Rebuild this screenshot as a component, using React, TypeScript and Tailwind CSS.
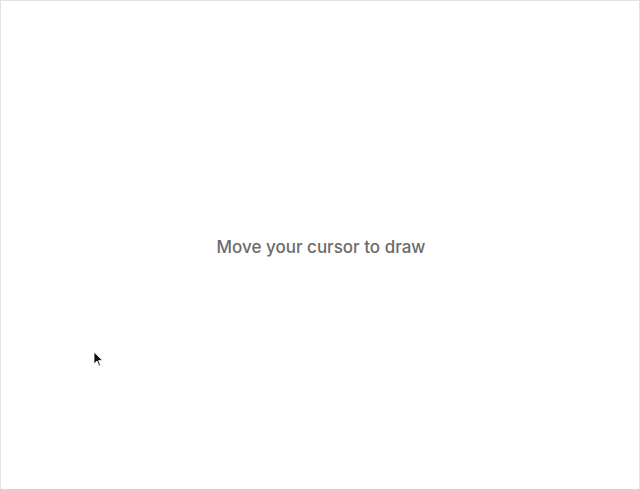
import React from "react";

export default function App() {
  return (
    <div className="relative w-[640px] h-[489px] bg-white border-t border-l border-r border-[#e2e2e2] overflow-hidden">
      <div className="flex h-full w-full items-center justify-center">
        <p
          className="text-[17px] font-medium text-[#6b6b6b] leading-none mt-[4px] ml-[2px]"
          style={{ fontFamily: "Inter, 'Noto Sans', sans-serif" }}
        >
          Move your cursor to draw
        </p>
      </div>
      <svg
        className="absolute left-[92px] top-[350px]"
        width="10"
        height="16"
        viewBox="0 0 10 16"
      >
        <path d="M1 1 L1 13 L4 10 L6 15 L7.5 14.4 L5.6 9.6 L9.5 9.6 Z" fill="#111" stroke="#fff" strokeWidth="0.8" />
      </svg>
    </div>
  );
}
